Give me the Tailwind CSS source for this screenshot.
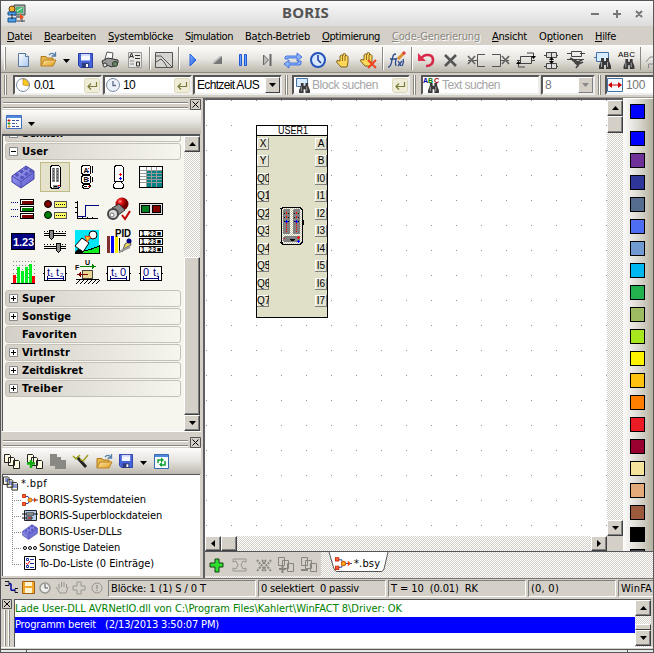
<!DOCTYPE html>
<html lang="de">
<head>
<meta charset="utf-8">
<title>BORIS</title>
<script src="https://cdn.jsdelivr.net/npm/@tailwindcss/browser@4"></script>
</head>
<body class="w-[654px] h-[653px] overflow-hidden bg-[#d4d0c8] text-black font-['DejaVu_Sans_Condensed','DejaVu_Sans',sans-serif] [font-stretch:condensed] text-[11px] leading-4">
<svg width="0" height="0" class="absolute">
  <defs>
    <linearGradient id="blk" x2="1" y2="1"><stop offset="0" stop-color="#a9a9f8"/><stop offset="1" stop-color="#5858c8"/></linearGradient>
    <linearGradient id="gold" x2="1" y2="1"><stop offset="0" stop-color="#ffe9a0"/><stop offset="1" stop-color="#e09a20"/></linearGradient>
    <linearGradient id="blu" x2="1" y2="1"><stop offset="0" stop-color="#8ab8ff"/><stop offset="1" stop-color="#1450d8"/></linearGradient>
    <linearGradient id="page" x2="1" y2="1"><stop offset="0" stop-color="#fff"/><stop offset="1" stop-color="#a8c8f0"/></linearGradient>
    <radialGradient id="ball" cx=".35" cy=".3"><stop offset="0" stop-color="#ff9090"/><stop offset=".4" stop-color="#e01010"/><stop offset="1" stop-color="#700000"/></radialGradient>
    <symbol id="open" viewBox="0 0 17 15"><path d="M1 14V4.500h5l1 1.500h6v3" fill="#e9b84c" stroke="#b07818"/><path d="M1 14 4 8h12l-3 6z" fill="url(#gold)" stroke="#b88020"/><path d="M9 3c2-2.500 4-2 6 0M15.500 0v4h-4" fill="none" stroke="#5580a8" stroke-width="1.300"/></symbol>
    <symbol id="save" viewBox="0 0 15 15"><path d="M.5.5h14v14H2.500l-2-2z" fill="#4464d8" stroke="#2c3ca8"/><path d="M3 1h9v6.500H3z" fill="#f4f6ff"/><path d="M3 2h9" stroke="#b0c0ff"/><path d="M4 10h7v5H4z" fill="#30387c"/><path d="M8 11h2v3H8z" fill="#fff"/></symbol>
    <symbol id="bino" viewBox="0 0 12 11"><path d="M2 0h3v3h2V0h3v3l2 5v3H7V7H5v4H0V8l2-5z" fill="#3a3a3a"/><path d="M2.500 4v5M8.500 4v5" stroke="#aaa"/></symbol>
    <symbol id="sys" viewBox="0 0 16 12"><path d="M3 2.500h3l2 3.500-2 3.500H3M8 6h8" fill="none" stroke="#2c4a98"/><path d="M.5.5h3v3h-3zM.5 8.500h3v3h-3z" fill="#ff6a3a" stroke="#d03010"/><circle cx="8" cy="6" r="2" fill="#ffb020" stroke="#d06010"/><path d="M12 3.500v5l3-2.500z" fill="#e04010"/></symbol>
    <symbol id="brick" viewBox="0 0 24 24"><path d="M1 11 15 1l8 5v8L10 23 1 17z" fill="url(#blk)" stroke="#4040a8"/><path d="m1 11 9 5.500L23 7M10 16.500V23" fill="none" stroke="#4a4ab8"/><g fill="#5454bc"><ellipse cx="6" cy="10" rx="2" ry="1.700"/><ellipse cx="11" cy="12.500" rx="2" ry="1.700"/><ellipse cx="10.500" cy="6.500" rx="2" ry="1.700"/><ellipse cx="15.500" cy="9" rx="2" ry="1.700"/><ellipse cx="15" cy="3.500" rx="2" ry="1.500"/><ellipse cx="20" cy="6" rx="2" ry="1.500"/></g></symbol>
    <symbol id="enter" viewBox="0 0 16 15"><rect x=".5" y=".5" width="15" height="14" rx="2" fill="#efedd8" stroke="#dcd8b8"/><path d="M12.500 4v4.500h-8M7 5.500l-3 3 3 3" fill="none" stroke="#7c7a38" stroke-width="1.200"/></symbol>
    <symbol id="hand" viewBox="0 0 14 15"><path d="M4 8V3l1.500-1L7 3V1l1.500-.5L9.500 1v2l1.500-.5 1 1V9l-1 5H5L.5 9 1 7.500z" fill="#ffd858" stroke="#806020"/><path d="M6.500 3v5M9 3v5" stroke="#906c20"/></symbol>
    <symbol id="docs" viewBox="0 0 16 15"><path d="M.5.5h5l1 1v7h-6zM4.500 3.500h5l1 1v7h-6zM9.500 6.500h5l1 1v7h-6z" fill="#fffbe0" stroke="#222"/></symbol>
    <symbol id="gdocs" viewBox="0 0 16 15"><path d="M.5.500h6v8h-6zM4.500 3.500h6v8h-6zM9.500 6.500h6v8h-6z" fill="#d4d0c8" stroke="#88857e"/></symbol>
  </defs>
</svg>

<main class="w-[654px] h-[653px] border-x border-t border-[#55565a] flex flex-col relative">
  <!-- title bar -->
  <header class="h-[25px] shrink-0 flex items-center bg-linear-to-b from-[#fafafa] to-[#dcdcdc] relative">
    <svg width="20" height="20" viewBox="0 0 20 20" class="ml-[6px]">
      <path d="M7 1h11v10H7z" fill="#a8b0a8" stroke="#3c4c48"/><path d="M9 3h7v6H9z" fill="#48b878"/><path d="M10 7l5-3" stroke="#d8ffd8"/>
      <circle cx="5" cy="5" r="3" fill="#f0b030" stroke="#684010"/><path d="M1 8h8v3H1zM1 14h8v4H1z" fill="#48a0e8" stroke="#205090"/><path d="M5 10v5M9 13h6" stroke="#222"/><path d="M13 10l4 3-4 3z" fill="#ff5010"/><path d="M15 14v4M10 17h8" stroke="#444"/>
    </svg>
    <h1 class="absolute left-[281px] top-[3px] text-[15px] font-bold text-[#555] font-['Noto_Sans',sans-serif]"><span data-w="47">BORIS</span></h1>
    <svg width="62" height="20" viewBox="588 3 62 20" class="ml-auto mr-[3px]"><path d="M591 13h8M613 13h8M617 9v8M636 10l6 6M642 10l-6 6" stroke="#777" stroke-width="2"/></svg>
  </header>

  <!-- menu -->
  <nav class="h-[19px] shrink-0 flex pl-[6px] pt-[3px] whitespace-nowrap">
    <div class="w-[37px]"><span data-w="25"><u>D</u>atei</span></div>
    <div class="w-[64px]"><span data-w="52"><u>B</u>earbeiten</span></div>
    <div class="w-[77px]"><span data-w="65"><u>S</u>ystemblöcke</span></div>
    <div class="w-[60px]"><span data-w="48">S<u>i</u>mulation</span></div>
    <div class="w-[77px]"><span data-w="65">Ba<u>t</u>ch-Betrieb</span></div>
    <div class="w-[70px]"><span data-w="58"><u>O</u>ptimierung</span></div>
    <div class="w-[100px] text-[#8a8780] [text-shadow:1px_1px_0_#fff]"><span data-w="88"><u>C</u>ode-Generierung</span></div>
    <div class="w-[47px]"><span data-w="35"><u>A</u>nsicht</span></div>
    <div class="w-[56px]"><span data-w="44">O<u>p</u>tionen</span></div>
    <div><span data-w="21"><u>H</u>ilfe</span></div>
  </nav>

  <!-- main toolbar -->
  <div class="h-[28px] shrink-0 flex bg-linear-to-b from-[#fcfcfb] via-[#e9e7e2] to-[#bcb8ae] border-b border-[#8c8980]">
    <svg width="10" height="27" viewBox="1 45 10 27"><path d="M4.500 47v23" stroke="#fff"/><path d="M5.500 47v23" stroke="#8c8980"/></svg>
    <svg width="25" height="27" viewBox="11 45 25 27"><path d="M18.500 53.500h7l3 3v10h-10z" fill="url(#page)" stroke="#5878a0"/><path d="M25.500 53.500v3h3" fill="#fff" stroke="#5878a0"/></svg>
    <svg width="24" height="27" viewBox="36 45 24 27"><use href="#open" x="40" y="52" width="17" height="15"/></svg>
    <svg width="13" height="27" viewBox="60 45 13 27"><path d="M63 59h7l-3.500 4z"/></svg>
    <svg width="25" height="27" viewBox="73 45 25 27"><use href="#save" x="78" y="53" width="15" height="15"/></svg>
    <svg width="24" height="27" viewBox="98 45 24 27"><path d="M105 59l2-7 6 1-1 7z" fill="#fff" stroke="#555"/><path d="M102 61l6-3 10 2v3l-6 4-9-3z" fill="#999" stroke="#333"/><circle cx="105" cy="65" r="2" fill="#ddd" stroke="#333"/><circle cx="115" cy="64" r="2.500" fill="#6a8a60" stroke="#333"/></svg>
    <svg width="24" height="27" viewBox="122 45 24 27"><path d="M128.500 52.500h13v15h-13z" fill="#e8e6e2" stroke="#999"/><path d="M129.500 58l2-5 2 5M130 56.500h3M135 55.500h5M135 58.500h5M136.500 62v4h3v-4z" fill="none" stroke="#333"/><path d="M130 61h4M130 64h4" stroke="#888"/></svg>
    <svg width="6" height="27" viewBox="146 45 6 27"><path d="M149.500 47v23" stroke="#8c8980"/><path d="M150.500 47v23" stroke="#fff"/></svg>
    <svg width="25" height="27" viewBox="152 45 25 27"><path d="M155.500 52.500h17v15h-17z" fill="#d6d4d0" stroke="#555"/><path d="M156 56h5l11 11M156 62l5-3 3 3 3 5" fill="none" stroke="#555"/></svg>
    <svg width="4" height="27" viewBox="177 45 4 27"><path d="M178.500 47v23" stroke="#8c8980"/><path d="M179.500 47v23" stroke="#fff"/></svg>
    <svg width="24" height="27" viewBox="181 45 24 27"><path d="M190 54l6 6-6 6z" fill="url(#blu)" stroke="#2060e0"/></svg>
    <svg width="25" height="27" viewBox="205 45 25 27"><path d="M213 64h9v-8z" fill="#777"/><path d="M213 64v-2l7-6h2z" fill="#bbb"/></svg>
    <svg width="25" height="27" viewBox="230 45 25 27"><path d="M239.500 54.500h2v11h-2zM244.500 54.500h2v11h-2z" fill="#6aa0ff" stroke="#1c58d8"/></svg>
    <svg width="25" height="27" viewBox="255 45 25 27"><path d="M263.500 55l5 5-5 5z" fill="#bbb" stroke="#666"/><path d="M270.500 54v12" stroke="#666" stroke-width="2"/></svg>
    <svg width="25" height="27" viewBox="280 45 25 27"><path d="M285 59v-2l1-1h11v-3l5 4-5 4v-3h-9v1zM301 61v3l-1 1h-11v3l-5-4 5-4v3h9v-2z" fill="#8ab4ff" stroke="#2c60d8" stroke-width=".8"/></svg>
    <svg width="26" height="27" viewBox="305 45 26 27"><circle cx="318" cy="60" r="7" fill="#d8e8ff" stroke="#2454b8" stroke-width="2"/><path d="M318 55v5l3 3" fill="none" stroke="#1838a0" stroke-width="1.500"/></svg>
    <svg width="24" height="27" viewBox="331 45 24 27"><use href="#hand" x="336" y="53" width="14" height="15"/></svg>
    <svg width="26" height="27" viewBox="355 45 26 27"><use href="#hand" x="360" y="52" width="14" height="15"/><path d="M368 60l8 8M376 60l-8 8" stroke="#f04020" stroke-width="2"/></svg>
    <svg width="4" height="27" viewBox="381 45 4 27"><path d="M382.500 47v23" stroke="#8c8980"/><path d="M383.500 47v23" stroke="#fff"/></svg>
    <svg width="25" height="27" viewBox="385 45 25 27"><path d="M388 67c3 0 3-3 4-7s1-6 4-6M390 59h6M397 58c-2 3-2 5-1 8M403 59c1 2 0 5-1 7M398 61l3 5M402 61l-4 5" fill="none" stroke="#2c4c90" stroke-width="1.300"/><path d="M398 59l6-6" stroke="#d89030" stroke-width="3"/><path d="M403 54l2-2" stroke="#e04040" stroke-width="3"/></svg>
    <svg width="4" height="27" viewBox="410 45 4 27"><path d="M411.500 47v23" stroke="#8c8980"/><path d="M412.500 47v23" stroke="#fff"/></svg>
    <svg width="24" height="27" viewBox="414 45 24 27"><path d="M421 59c3-6 12-5 12 1 0 4-3 6-7 6" fill="none" stroke="#d82848" stroke-width="2.600"/><path d="M418 53v8h8z" fill="#e03050"/></svg>
    <svg width="25" height="27" viewBox="438 45 25 27"><path d="M445 55l11 11M456 55l-11 11" stroke="#555" stroke-width="2.600"/></svg>
    <svg width="25" height="27" viewBox="463 45 25 27"><path d="M485 54.500h-7.500v12h7.500M468 60.500h9" fill="none" stroke="#555"/><path d="M468 56l7 8M475 56l-7 8" stroke="#666" stroke-width="1.800"/></svg>
    <svg width="25" height="27" viewBox="488 45 25 27"><path d="M492 54.500h8.500v12H492M500 60.500h9" fill="none" stroke="#555"/><path d="M502 56l7 8M509 56l-7 8" stroke="#666" stroke-width="1.800"/></svg>
    <svg width="25" height="27" viewBox="513 45 25 27"><path d="M520.500 56.500h11v7h-11zM517 60.500h3M532 60.500h3M527 53h6.500v4M525 67h-6.500v-4" fill="none" stroke="#444"/><path d="M531 56h5l-2.500 3zM516 64h5l-2.500-3z"/></svg>
    <svg width="25" height="27" viewBox="538 45 25 27"><path d="M546.500 52.500h10v5h-10zM546.500 63.500h10v5h-10zM551.500 53v15M544 55.500h3M556 55.500h2M544 66.500h3M556 66.500h2" fill="#ddd" stroke="#444"/><path d="M549 60h5l-2.500-3zM549 61h5l-2.500 3z"/></svg>
    <svg width="25" height="27" viewBox="563 45 25 27"><path d="M567 53.500h5M571.500 51.500h10v5h-10zM567 59.500h17M580 53.500h5" fill="none" stroke="#444"/><path d="M570 58l8 4 4-2M572 60l7 4 4-2M574 62l5 4M580 62l-4 6" fill="none" stroke="#444" stroke-width="1.500"/></svg>
    <svg width="27" height="27" viewBox="588 45 27 27"><path d="M596.500 52.500h12v9h-12zM594 57.500h3" fill="#d8ecff" stroke="#4470a8"/><use href="#bino" x="599" y="58" width="12" height="11"/></svg>
    <svg width="25" height="27" viewBox="615 45 25 27"><text x="618" y="57" font-size="8" textLength="17" class="font-['Liberation_Sans',sans-serif]">ABC</text><use href="#bino" x="623" y="59" width="12" height="10"/></svg>
    <svg width="13" height="27" viewBox="640 45 13 27"><path d="M640.500 47v23" stroke="#8c8980"/><path d="M646 62l4-5h3M648.500 68v-4h5" fill="none" stroke="#888"/></svg>
  </div>

  <!-- parameter toolbar -->
  <div class="h-[25px] shrink-0 flex items-center bg-[#d4d0c8] border-b border-[#9a978f] font-['Liberation_Sans',sans-serif] text-[12px]">
    <div class="ml-[3px] mr-[6px] w-[3px] h-[20px] border-l border-r border-[#8c8980] bg-white"></div>
    <div class="w-[89px] h-[20px] bg-white border-2 border-t-[#555] border-l-[#555] border-r-[#eee] border-b-[#eee] flex items-center">
      <svg width="16" height="16" viewBox="0 0 16 16"><circle cx="8" cy="8" r="6.500" fill="#fff" stroke="#7888a0"/><path d="M8 8V2a6 6 0 0 1 5.500 7z" fill="#ffc820" stroke="#b08010" stroke-width=".6"/></svg>
      <span class="ml-[3px]" data-w="20">0.01</span><svg width="16" height="15" class="ml-auto"><use href="#enter"/></svg>
    </div>
    <div class="w-[89px] h-[20px] bg-white border-2 border-t-[#555] border-l-[#555] border-r-[#eee] border-b-[#eee] flex items-center ml-px">
      <svg width="16" height="16" viewBox="0 0 16 16"><circle cx="8" cy="8" r="6.500" fill="#eef2fa" stroke="#7888a0"/><path d="M8 4v4.500h3" fill="none" stroke="#5a6a88" stroke-width="1.300"/></svg>
      <span class="ml-[2px]" data-w="12">10</span><svg width="16" height="15" class="ml-auto"><use href="#enter"/></svg>
    </div>
    <div class="w-[89px] h-[20px] bg-white border-2 border-t-[#555] border-l-[#555] border-r-[#eee] border-b-[#eee] flex items-center ml-px pl-[2px]">
      <span data-w="62">Echtzeit AUS</span>
      <div class="ml-auto w-[15px] h-4 bg-[#d4d0c8] border border-t-white border-l-white border-r-[#404040] border-b-[#404040] flex items-center justify-center"><svg width="7" height="4"><path d="M0 0h7L3.500 4z"/></svg></div>
    </div>
    <div class="ml-[3px] mr-[4px] w-[3px] h-[20px] border-l border-r border-[#8c8980] bg-white"></div>
    <div class="w-[118px] h-[20px] bg-white border-2 border-t-[#555] border-l-[#555] border-r-[#eee] border-b-[#eee] flex items-center text-[#a5a5a5]">
      <svg width="16" height="16" viewBox="0 0 16 16" class="ml-px"><path d="M1.500 1.500h11v8h-11z" fill="#d8ecff" stroke="#4470a8"/><use href="#bino" x="4" y="6" width="11" height="10"/></svg>
      <span class="ml-px" data-w="66">Block suchen</span><svg width="16" height="15" class="ml-auto"><use href="#enter"/></svg>
    </div>
    <div class="ml-[3px] mr-[5px] w-[3px] h-[20px] border-l border-r border-[#8c8980] bg-white"></div>
    <div class="w-[119px] h-[20px] bg-white border-2 border-t-[#555] border-l-[#555] border-r-[#eee] border-b-[#eee] flex items-center text-[#a5a5a5]">
      <svg width="17" height="16" viewBox="0 0 17 16"><g font-size="7" font-weight="bold"><text x="0" y="6" fill="#0000a0">A</text><text x="5" y="6" fill="#008000">B</text><text x="11" y="6" fill="#b00000">C</text></g><use href="#bino" x="5" y="6" width="11" height="10"/></svg>
      <span class="ml-[2px]" data-w="58">Text suchen</span>
    </div>
    <div class="w-[54px] h-[20px] bg-white border-2 border-t-[#555] border-l-[#555] border-r-[#eee] border-b-[#eee] flex items-center ml-px pl-[2px] text-[#777]">
      8<div class="ml-auto w-[15px] h-4 bg-[#d4d0c8] border border-t-white border-l-white border-r-[#808080] border-b-[#808080] flex items-center justify-center"><svg width="7" height="4"><path fill="#888" d="M0 0h7L3.500 4z"/></svg></div>
    </div>
    <div class="ml-[3px] mr-[4px] w-[3px] h-[20px] border-l border-r border-[#8c8980] bg-white"></div>
    <div class="flex-1 h-[20px] bg-white border-2 border-r-0 border-t-[#555] border-l-[#555] border-b-[#eee] flex items-center text-[#777] overflow-hidden">
      <svg width="16" height="14" viewBox="0 0 16 14" class="shrink-0"><path d="M.5.500h15v13H.5z" fill="#f4f8ff" stroke="#4470a8"/><path d="M2 7h12" stroke="#d00000"/><path d="M5 4v6L1 7zM11 4v6l4-3z" fill="#d00000"/></svg>
      <span class="ml-[3px]" data-w="19">100</span>
    </div>
  </div>

  <!-- workspace -->
  <div class="h-[480px] shrink-0 flex">
    <aside class="w-[202px] shrink-0 flex flex-col pl-px pt-px">
      <div class="h-[11px] flex items-center"><div class="ml-px w-[185px] h-[6px] border-y border-[#88857e] bg-[#d4d0c8] shadow-[inset_0_1px_0_#fff,0_1px_0_#fff]"></div><svg width="11" height="11" class="ml-[2px]"><path d="M.5.500h10v10H.5z" fill="#d4d0c8" stroke="#555"/><path d="M2.500 2.500l6 6M8.500 2.500l-6 6" stroke="#000"/></svg></div>
      <div class="h-[24px] w-[199px] shrink-0 flex items-center bg-linear-to-b from-[#fcfcfb] via-[#e6e4df] to-[#bcb8ae]">
        <svg width="34" height="24" viewBox="2 110 34 24"><path d="M6.500 115.500h15v13h-15z" fill="#fff" stroke="#4470c0"/><path d="M7 116h14v2H7z" fill="#5088e0"/><path d="M8 120h2v1H8z" stroke="#d02020"/><path d="M8 123h2v1H8z" stroke="#20a020"/><path d="M8 126h2v1H8z" stroke="#e0a020"/><path d="M12 120.500h7M12 123.500h5M12 126.500h7" stroke="#3858a0" stroke-dasharray="3 1"/><path d="M28 122h7l-3.500 4z"/></svg>
      </div>
      <div class="h-[297px] w-[198px] shrink-0 flex bg-[#f6f5ee] border-t-2 border-l border-[#55565a]">
        <div class="flex-1 overflow-hidden pl-[2px] font-bold">
          <div class="h-[6px] w-[176px] border border-t-0 border-[#c4c2b8] rounded-b-[3px] bg-linear-to-r from-[#d4d0c8] to-[#f6f5ee] relative overflow-hidden"><svg width="9" height="4" class="ml-[3px] absolute bottom-[3px]"><path d="M.5 0v3.500h8V0" fill="#fff" stroke="#888"/></svg><span class="absolute left-4 bottom-[-1px]" data-w="41">Senken</span></div>
          <div class="mt-px h-[17px] w-[176px] border border-[#c4c2b8] rounded-[3px] bg-linear-to-r from-[#d4d0c8] to-[#f6f5ee] flex items-center"><svg width="9" height="9" class="ml-[3px] mr-[4px]"><path d="M.5.500h8v8h-8z" fill="#fff" stroke="#888"/><path d="M2 4.500h5" stroke="#000"/></svg><span data-w="26">User</span></div>
          <!-- block palette -->
          <svg width="178" height="130" viewBox="5 160 178 130" shape-rendering="crispEdges">
            <use href="#brick" x="11" y="165" width="24" height="24" shape-rendering="auto"/>
            <path d="M40.500 162.500h29v29h-29z" fill="#e5e2cc" stroke="#c0ba84"/>
            <g stroke="#000"><path d="M51.500 165.500h7l2 2v19l-2 2h-7l-1-2v-19z" fill="#fff"/><path d="M52 168h3v14h-3zM56 168h3v14h-3z" fill="#888" stroke="none"/><path d="M53.500 168v14M57.500 168v14" stroke="#444" stroke-dasharray="1 2"/><path d="M53 185h6v3h-6z" fill="#888" stroke="none"/><path d="M54 186.500h3"/><path d="M58 185.500h2" stroke="red"/><path d="M58 187.500h1" stroke="#00f"/></g>
            <g fill="#fff" stroke="#000"><path d="M83.500 165.500h6l1 1v7l-1 1h-6l-2-1v-7zM83.500 175.500h6l1 1v6l-1 1h-6l-2-1v-6zM83.500 184.500h6l1 2-2 2h-5l-1-2z"/><path d="M92.500 166v7M92.500 177v5" fill="none"/><path d="M88 168.500h1M88 178.500h1M88 186.500h2" stroke="red"/><path d="M88 171.500h1M88 180.500h1" stroke="#00f"/><path d="M84 186.500h3"/></g>
            <g fill="#fff" stroke="#000"><path d="M115.500 165.500h6l2 2v13l-2 2 2 2v3l-2 1h-6l-2-1v-3l2-2-1-2v-13z"/><path d="M115 181.500h8"/><path d="M120.500 173v3M119 174.500h3" stroke="red"/><path d="M120.500 177v3M119 178.500h3" stroke="#00f"/></g>
            <path d="M139.500 166.500h23v21h-23z" fill="#fff" stroke="#000"/><path d="M146 170h16v17h-16z" fill="#008080"/><path d="M146.500 167v20M151.500 167v20M156.500 167v20M140 170.500h22M140 173.500h22M140 176.500h22M140 179.500h22M140 182.500h22" stroke="#999"/><path d="M139.500 166.500h23v21h-23z" fill="none" stroke="#000"/>
            <g stroke="#000"><path d="M20.500 199.500h13v5h-13zM20.500 206.500h13v5h-13zM20.500 213.500h13v5h-13z" fill="#fff"/><path d="M22 201h10v2H22zM22 215h10v2H22z" fill="#800000" stroke="#800000"/><path d="M22 208h10v2H22z" fill="#008000" stroke="#008000"/><path d="M11 202.500h8M11 209.500h8M11 216.500h8" stroke="#000080" stroke-dasharray="1 1"/></g>
            <g shape-rendering="auto"><circle cx="48" cy="204" r="3.500" fill="#800000" stroke="#000"/><circle cx="48" cy="215" r="3.500" fill="#008000" stroke="#000"/></g><path d="M54.500 201.500h12v6h-12zM54.500 212.500h12v6h-12z" fill="#ff6" stroke="#555"/><path d="M56 204.500h9M56 215.500h9" stroke="#000" stroke-dasharray="1 1"/>
            <path d="M77.500 201v17.500H98M75 202.500h3M75 207.500h3M75 212.500h3M82.500 219v-2M87.500 219v-2M92.500 219v-2" fill="none" stroke="#000"/><path d="M78 216.500h7v-11h14" fill="none" stroke="#000080"/>
            <g shape-rendering="auto"><circle cx="122" cy="204" r="6.500" fill="url(#ball)"/><path d="M112 208l7-4 6 6-8 6z" fill="#888" stroke="#333"/><circle cx="113" cy="214" r="5" fill="#ddd" stroke="#444" stroke-width="2"/><circle cx="112" cy="215" r="2" fill="#fff" stroke="#777"/><path d="M122 215l3 4 5-8" fill="none" stroke="#c00000" stroke-width="2"/></g>
            <path d="M139.500 203.500h23v11h-23z" fill="#ddd" stroke="#000"/><path d="M141.500 205.500h8v7h-8z" fill="#008020" stroke="#000"/><path d="M152.500 205.500h8v7h-8z" fill="#800000" stroke="#000"/>
            <path d="M11.500 233.500h23v16h-23z" fill="#000080" stroke="#000"/>
            <g stroke="#000" fill="none"><path d="M44 233.500h22M44 235.500h22M44 246.500h22M44 248.500h22"/><path d="M44 231.500h22M44 244.500h22" stroke-dasharray="1 2"/><path d="M49.500 230.500h4v7l-2 2-2-2zM56.500 243.500h4v7l-2 2-2-2z" fill="#888"/></g>
            <path d="M75 230h24v23H75z" fill="#00e8f8"/><path d="M75 253c8-2 17-3 24-7v7z" fill="#10f020" stroke="#000"/><g shape-rendering="auto"><circle cx="93" cy="235" r="4" fill="#fff" stroke="#000"/><path d="M75 246l7-8 7 5-6 9z" fill="#fff" stroke="#000"/><path d="M75 253c1-5 7-5 8 0z"/><path d="M85 236l6 1-4 5z" fill="#ffd020" stroke="#f03010"/></g>
            <path d="M107 236h3v17h-3z" fill="#803030"/><path d="M111 236h3v17h-3z" fill="#00f"/><path d="M115 236h3v17h-3z" fill="#fe0"/><path d="M119 238h1v15h-1z"/><g shape-rendering="auto"><path d="M122 252l3-8 5-3 1 4-6 3z" fill="#f0d860" stroke="#555"/><circle cx="129" cy="241" r="2.500" fill="#000080"/><path d="M119 252l11-5" stroke="#999" stroke-width="2"/></g>
            <g fill="#fff" stroke="#000"><path d="M139.500 230.500h23v6h-23zM139.500 238.500h23v6h-23zM139.500 246.500h23v6h-23z"/></g>
            <g font-family="Liberation Sans" font-weight="bold"><text x="13" y="246" font-size="11" fill="#fff" textLength="21">1.23</text><text x="115" y="237" font-size="10" textLength="16" lengthAdjust="spacingAndGlyphs">PID</text><g font-size="7"><text x="141" y="236" textLength="20">1.23■</text><text x="141" y="244" textLength="20">1.23■</text><text x="141" y="252" textLength="20">1.23■</text></g></g>
            <path d="M13 261.500h22M13 265.500h22M13 269.500h22M13 273.500h22M13 277.500h22" stroke="#888" stroke-dasharray="1 2"/><path d="M13 275h3v8h-3zM32 276h3v7h-3z" fill="#f00"/><path d="M17 267h3v16h-3zM21 271h3v12h-3zM25 267h3v16h-3zM29 264h3v19h-3z" fill="#00f020"/><path d="M11 283.500h24" stroke="#000"/>
            <g fill="#fff" stroke="#000"><path d="M44.500 266.500h21v14h-21zM107.500 266.500h22v14h-22zM140.500 266.500h21v14h-21z"/><path d="M43 273h1M66 273h1M106 273h1M130 273h1M139 273h1M162 273h1"/></g><path d="M47 278.500h17M47.500 276v4M63.500 276v4M110 278.500h17M110.500 276v4M126.500 276v4M143 278.500h16M143.500 276v4M158.500 276v4" stroke="#000080"/>
            <g font-family="Liberation Sans" font-size="11" fill="#000080" font-weight="normal"><text x="47" y="276">t</text><text x="56" y="276">t</text><text x="111" y="276">t</text><text x="120" y="276">0</text><text x="143" y="276">0</text><text x="153" y="276">t</text><g font-size="6"><text x="50" y="277">1</text><text x="60" y="277">2</text><text x="114" y="277">1</text><text x="156" y="277">1</text></g></g>
            <path d="M82.500 270.500h10v8h-10z" fill="#e8d890" stroke="#444"/><path d="M80 266.500h13" stroke="#008000"/><path d="M92 264l4 2.500-4 2.500z" fill="#008000"/><path d="M79 274.500h9" stroke="#800000"/><path d="M81 272v5l-4-2.500z" fill="#800000"/><path d="M76 279.500h23" stroke="#000"/><path d="M76 284l4-4M80 284l4-4M84 284l4-4M88 284l4-4M92 284l4-4M96 284l4-4" stroke="#000" shape-rendering="auto"/>
            <g font-family="Liberation Sans" font-size="7"><text x="85" y="265">U</text><text x="75" y="270">F</text><text x="83.500" y="172.500">A</text><text x="83.500" y="182">B</text></g>
          </svg>
          <div class="flex flex-col gap-px">
            <div class="h-[17px] w-[176px] border border-[#c4c2b8] rounded-[3px] bg-linear-to-r from-[#d4d0c8] to-[#f6f5ee] flex items-center"><svg width="9" height="9" class="ml-[3px] mr-[4px]"><path d="M.5.500h8v8h-8z" fill="#fff" stroke="#888"/><path d="M2 4.500h5M4.500 2v5" stroke="#000"/></svg><span data-w="33">Super</span></div>
            <div class="h-[17px] w-[176px] border border-[#c4c2b8] rounded-[3px] bg-linear-to-r from-[#d4d0c8] to-[#f6f5ee] flex items-center"><svg width="9" height="9" class="ml-[3px] mr-[4px]"><path d="M.5.500h8v8h-8z" fill="#fff" stroke="#888"/><path d="M2 4.500h5M4.500 2v5" stroke="#000"/></svg><span data-w="49">Sonstige</span></div>
            <div class="h-[17px] w-[176px] border border-[#c4c2b8] rounded-[3px] bg-linear-to-r from-[#d4d0c8] to-[#f6f5ee] flex items-center pl-4"><span data-w="55">Favoriten</span></div>
            <div class="h-[17px] w-[176px] border border-[#c4c2b8] rounded-[3px] bg-linear-to-r from-[#d4d0c8] to-[#f6f5ee] flex items-center"><svg width="9" height="9" class="ml-[3px] mr-[4px]"><path d="M.5.500h8v8h-8z" fill="#fff" stroke="#888"/><path d="M2 4.500h5M4.500 2v5" stroke="#000"/></svg><span data-w="48">VirtInstr</span></div>
            <div class="h-[17px] w-[176px] border border-[#c4c2b8] rounded-[3px] bg-linear-to-r from-[#d4d0c8] to-[#f6f5ee] flex items-center"><svg width="9" height="9" class="ml-[3px] mr-[4px]"><path d="M.5.500h8v8h-8z" fill="#fff" stroke="#888"/><path d="M2 4.500h5M4.500 2v5" stroke="#000"/></svg><span data-w="61">Zeitdiskret</span></div>
            <div class="h-[17px] w-[176px] border border-[#c4c2b8] rounded-[3px] bg-linear-to-r from-[#d4d0c8] to-[#f6f5ee] flex items-center"><svg width="9" height="9" class="ml-[3px] mr-[4px]"><path d="M.5.500h8v8h-8z" fill="#fff" stroke="#888"/><path d="M2 4.500h5M4.500 2v5" stroke="#000"/></svg><span data-w="41">Treiber</span></div>
          </div>
        </div>
        <div class="w-4 shrink-0 flex flex-col bg-[repeating-conic-gradient(#fff_0_25%,#d4d0c8_0_50%)] bg-[length:2px_2px]">
          <div class="h-4 shrink-0 bg-[#d4d0c8] border border-t-white border-l-white border-r-[#404040] border-b-[#404040] shadow-[inset_-1px_-1px_0_#808080] flex items-center justify-center"><svg width="7" height="4"><path d="M0 4h7L3.500 0z"/></svg></div>
          <div class="h-[105px] shrink-0"></div>
          <div class="flex-1 bg-[#d4d0c8] border border-t-white border-l-white border-r-[#404040] border-b-[#404040] shadow-[inset_-1px_-1px_0_#808080]"></div>
          <div class="h-4 shrink-0 bg-[#d4d0c8] border border-t-white border-l-white border-r-[#404040] border-b-[#404040] shadow-[inset_-1px_-1px_0_#808080] flex items-center justify-center"><svg width="7" height="4"><path d="M0 0h7L3.500 4z"/></svg></div>
        </div>
      </div>
      <div class="h-[6px] shrink-0 border-t border-white w-[199px]"></div>
      <div class="h-[11px] shrink-0 flex items-center"><div class="ml-px w-[185px] h-[6px] border-y border-[#88857e] shadow-[inset_0_1px_0_#fff,0_1px_0_#fff]"></div><svg width="11" height="11" class="ml-[2px]"><path d="M.5.500h10v10H.5z" fill="#d4d0c8" stroke="#555"/><path d="M2.500 2.500l6 6M8.500 2.500l-6 6" stroke="#000"/></svg></div>
      <svg width="199" height="26" viewBox="2 448 199 26" class="shrink-0 bg-linear-to-b from-[#fcfcfb] via-[#e6e4df] to-[#bcb8ae]">
        <use href="#docs" x="4" y="454" width="16" height="15"/><use href="#docs" x="27" y="454" width="16" height="15"/><path d="M27 463.500h8M31 460v8" stroke="#10b010" stroke-width="2.500"/>
        <path d="M50 454h7v3h4v3h5v9h-11v-3h-5z" fill="#8a8882"/>
        <path d="M77 457l9 10" stroke="#222" stroke-width="3"/><path d="M73 456l3 3 4-4M80 459l3 2 5-6" fill="none" stroke="#a0a020" stroke-width="1.500"/>
        <use href="#open" x="96" y="454" width="17" height="15"/><use href="#save" x="119" y="454" width="14" height="14"/><path d="M140 461h7l-3.500 4z"/>
        <path d="M154.500 454.500h14v14h-14z" fill="#f8fcff" stroke="#3868b0"/><path d="M155 455h13v2h-13z" fill="#5088e0"/><path d="M158 463v-3h5M165 461v4h-5" fill="none" stroke="#10a030" stroke-width="1.500"/><path d="M161 457.500v5l3-2.500zM162 462v5l-3-2.500z" fill="#10a030"/>
      </svg>
      <div class="w-[198px] flex-1 bg-white border-t border-l border-[#55565a] flex relative whitespace-nowrap">
        <svg width="36" height="100" viewBox="3 474 36 100"><path d="M12.500 491v73M12 499.500h9M12 515.500h9M12 531.500h9M12 547.500h9M12 563.500h9" fill="none" stroke="#888" stroke-dasharray="1 1"/>
          <use href="#docs" x="3" y="475" width="15" height="15"/><path d="M5 478h3M5 480h3M9 481h3M9 483h3M13 484h4M13 486h4" stroke="#2040c0"/>
          <use href="#sys" x="22" y="493" width="16" height="12"/>
          <path d="M24.500 509.500h12v10h-12z" fill="#b8d0f0" stroke="#222"/><path d="M26 512h8v2h-8zM26 516h6v2h-6z" fill="#fff" stroke="#111"/><path d="M22 513h3M22 517h3M35 513h3" stroke="#111"/><path d="M28 517h3" stroke="#d00"/>
          <use href="#brick" x="22" y="523" width="16" height="16"/>
          <g fill="#fff" stroke="#000"><circle cx="25" cy="547" r="1.500"/><circle cx="30" cy="547" r="1.500"/><circle cx="35" cy="547" r="1.500"/></g>
          <path d="M24.500 555.500h11v13h-11z" fill="#fff" stroke="#000"/><path d="M26.500 557.500h2v2h-2zM26.500 564.500h2v2h-2zM30 558.500h4M30 562.500h4M30 566.500h4" fill="none" stroke="#1830a0"/><path d="M26 562l1.500 1.500L30 560" fill="none" stroke="red"/></svg>
        <div class="flex flex-col pt-px">
          <span class="ml-[-18px]"><span data-w="26">*.bpf</span></span>
          <span><span data-w="107">BORIS-Systemdateien</span></span>
          <span><span data-w="123">BORIS-Superblockdateien</span></span>
          <span><span data-w="83">BORIS-User-DLLs</span></span>
          <span><span data-w="81">Sonstige Dateien</span></span>
          <span><span data-w="115">To-Do-Liste (0 Einträge)</span></span>
        </div>
      </div>
      <div class="h-[2px] shrink-0"></div>
    </aside>

    <!-- sheet -->
    <section class="w-[420px] shrink-0 flex flex-col border-l-2 border-t-2 border-[#606064]">
      <div class="h-[436px] flex shrink-0">
        <div class="w-[402px] bg-white">
          <svg width="402" height="436" viewBox="205 100 402 436">
            <defs><pattern id="grid" x="206" y="100" width="25" height="25" patternUnits="userSpaceOnUse"><path d="M0 0h1v1H0z" fill="#909090"/></pattern><pattern id="chk" width="2" height="2" patternUnits="userSpaceOnUse"><path d="M0 0h2v2H0z" fill="#fff"/><path d="M0 0h1v1H0zM1 1h1v1H1z" fill="#c8c8a8"/></pattern></defs>
            <rect x="205" y="100" width="402" height="436" fill="url(#grid)"/>
            <g shape-rendering="crispEdges">
              <path d="M256.500 125.500h71v192h-71z" fill="#e0dfc8" stroke="#000"/><path d="M257 126h70v9h-70z" fill="#fff"/><path d="M257 135.500h70" stroke="#000"/>
              <g id="ports"></g>
              <path d="M281.500 207.500h20v36h-20z" fill="url(#chk)"/><path d="M283 207.500h17l2 2v33l-2 2h-17l-2-2v-33zM303 220v5M280 208h3M280 242h3" fill="none" stroke="#000"/>
              <path d="M284 209h5l1 1v24h-7v-24zM294 209h5l1 1v24h-7v-24zM284 236h15l1 1v4l-1 1h-15l-1-1v-4z" fill="#808080"/><path d="M286.500 223v10M296.500 223v10" stroke="#f00" stroke-dasharray="1 1"/><path d="M286.500 212v7M296.500 212v7" stroke="#f00" stroke-dasharray="2 2"/><path d="M284 213.500h1M288 213.500h1M284 217.500h1M288 217.500h1M284 221.500h1M288 221.500h1M294 213.500h1M298 213.500h1M294 217.500h1M298 217.500h1M294 221.500h1M298 221.500h1" stroke="#000"/><path d="M285 221.500h3M286.500 220v3M295 221.500h3M296.500 220v3M297 241.500h3M298.500 240v3" stroke="#00f"/><path d="M297 237.500h3M298.500 236v3M284 238.500h1" stroke="#f00"/><path d="M290 239h5v1h-1v1h-3v-1h-1z"/>
            </g>
            <text x="278" y="134" font-size="10" textLength="30" lengthAdjust="spacingAndGlyphs" font-family="Liberation Sans">USER1</text>
          </svg>
        </div>
        <div class="w-4 flex flex-col bg-[repeating-conic-gradient(#fff_0_25%,#d4d0c8_0_50%)] bg-[length:2px_2px]">
          <div class="h-4 bg-[#d4d0c8] border border-t-white border-l-white border-r-[#404040] border-b-[#404040] shadow-[inset_-1px_-1px_0_#808080] flex items-center justify-center"><svg width="7" height="4"><path d="M0 4h7L3.500 0z"/></svg></div>
          <div class="h-[17px] bg-[#d4d0c8] border border-t-white border-l-white border-r-[#404040] border-b-[#404040] shadow-[inset_-1px_-1px_0_#808080]"></div>
          <div class="mt-auto h-4 bg-[#d4d0c8] border border-t-white border-l-white border-r-[#404040] border-b-[#404040] shadow-[inset_-1px_-1px_0_#808080] flex items-center justify-center"><svg width="7" height="4"><path d="M0 0h7L3.500 4z"/></svg></div>
        </div>
      </div>
      <div class="h-[15px] w-[402px] shrink-0 flex bg-[repeating-conic-gradient(#fff_0_25%,#d4d0c8_0_50%)] bg-[length:2px_2px]">
        <div class="w-4 bg-[#d4d0c8] border border-t-white border-l-white border-r-[#404040] border-b-[#404040] shadow-[inset_-1px_-1px_0_#808080] flex items-center justify-center"><svg width="4" height="7"><path d="M4 0v7L0 3.500z"/></svg></div>
        <div class="w-4 bg-[#d4d0c8] border border-t-white border-l-white border-r-[#404040] border-b-[#404040] shadow-[inset_-1px_-1px_0_#808080]"></div>
        <div class="ml-auto w-4 bg-[#d4d0c8] border border-t-white border-l-white border-r-[#404040] border-b-[#404040] shadow-[inset_-1px_-1px_0_#808080] flex items-center justify-center"><svg width="4" height="7"><path d="M0 0v7l4-3.500z"/></svg></div>
      </div>
      <div class="w-[448px] flex-1 border-t border-[#55565a] flex bg-[repeating-conic-gradient(#fff_0_25%,#d4d0c8_0_50%)] bg-[length:2px_2px] relative">
        <svg width="116" height="24" viewBox="204 552 116 24" class="bg-[#d4d0c8]"><path d="M214 559h4v4h4v4h-4v5h-4v-5h-5v-4h5z" fill="#30e030" stroke="#104010"/><path d="M232 559h13v3l-3-1-2 4 2 4 3-1v3h-13v-3l3 1 2-4-2-4-3 1z" fill="none" stroke="#99968f"/><path d="M256 560l9 11M265 560l-9 11M261 560l9 11M270 560l-9 11" stroke="#8c8982" stroke-width="2" stroke-dasharray="2 1"/><use href="#gdocs" x="277" y="557" width="16" height="15"/><path d="M278 569h7M281.500 566v7" stroke="#88857e" stroke-width="2"/><use href="#gdocs" x="300" y="557" width="16" height="15"/><path d="M300 570h7" stroke="#88857e" stroke-width="2"/></svg>
        <svg width="75" height="24" viewBox="321 552 75 24"><path d="M329 552l5 17 2 2.500h46l2-2.500 4-17" fill="#fff" stroke="#555"/><use href="#sys" x="335" y="557" width="17" height="13"/><text x="354" y="567" textLength="26">*.bsy</text></svg>
      </div>
    </section>

    <!-- colour palette -->
    <div class="w-[30px] shrink-0 h-[453px] pt-[5px] flex flex-col items-start gap-[7px] pl-[7px] overflow-hidden border-t border-white bg-linear-to-r from-[#fbfbfa] via-[#dedbd4] to-[#b5b09f]">
      <i class="size-[15px] shrink-0 border border-black bg-[#0000ff] mb-[5px]"></i>
      <i class="size-[15px] shrink-0 border border-black bg-[#0000ff]"></i>
      <i class="size-[15px] shrink-0 border border-black bg-[#6f3198]"></i>
      <i class="size-[15px] shrink-0 border border-black bg-[#2f3699]"></i>
      <i class="size-[15px] shrink-0 border border-black bg-[#546d8e]"></i>
      <i class="size-[15px] shrink-0 border border-black bg-[#4d6df3]"></i>
      <i class="size-[15px] shrink-0 border border-black bg-[#709ad1]"></i>
      <i class="size-[15px] shrink-0 border border-black bg-[#00b7ef]"></i>
      <i class="size-[15px] shrink-0 border border-black bg-[#22b14c]"></i>
      <i class="size-[15px] shrink-0 border border-black bg-[#9dbb61]"></i>
      <i class="size-[15px] shrink-0 border border-black bg-[#a8e61d]"></i>
      <i class="size-[15px] shrink-0 border border-black bg-[#fff200]"></i>
      <i class="size-[15px] shrink-0 border border-black bg-[#ffc20e]"></i>
      <i class="size-[15px] shrink-0 border border-black bg-[#ff7e00]"></i>
      <i class="size-[15px] shrink-0 border border-black bg-[#ed1c24]"></i>
      <i class="size-[15px] shrink-0 border border-black bg-[#990030]"></i>
      <i class="size-[15px] shrink-0 border border-black bg-[#f5e49c]"></i>
      <i class="size-[15px] shrink-0 border border-black bg-[#e5aa7a]"></i>
      <i class="size-[15px] shrink-0 border border-black bg-[#9c5a3c]"></i>
      <i class="size-[15px] shrink-0 border border-black bg-black"></i>
      <i class="size-[15px] shrink-0 border border-black bg-[#464646]"></i>
    </div>
  </div>

  <!-- status bar -->
  <div class="h-[21px] shrink-0 flex pt-px pb-[3px] whitespace-nowrap border-t border-[#77746d]">
    <svg width="105" height="17" viewBox="1 580 105 17" class="mr-[2px]"><path d="M5 581.500h4v4H5M9 583.500h2v7h4M18 588.500h-3v4h3" fill="none" stroke="#112"/><path d="M9 584h2v6h4" fill="none" stroke="#0000e0"/><path d="M22.500 581.500h12v12h-12z" fill="#f0a830" stroke="#a06010"/><path d="M25 582h7v4h-7zM25 588h7v5h-7z" fill="#fff4d0"/><circle cx="45" cy="588" r="5" fill="#eee" stroke="#99968f" stroke-width="1.500"/><path d="M45 584v4h3" fill="none" stroke="#555"/><g fill="none" stroke="#99968f"><path d="M59 589v-5M61.500 587v-5M64 587v-5M66.500 588v-4M56 587l4 6h6l2-6"/><path d="M77 582h4v4h4v4h-4v4h-4v-4h-4v-4h4z"/><circle cx="97" cy="588" r="5"/><path d="M97 585v4M97 590v1" stroke-width="1.500"/></g></svg>
    <div class="w-[148px] h-[17px] border border-t-[#808080] border-l-[#808080] border-white pl-[2px]"><span data-w="95">Blöcke: 1 (1) S / 0 T</span></div>
    <div class="ml-[2px] w-[128px] h-[17px] border border-t-[#808080] border-l-[#808080] border-white pl-[2px]"><span data-w="98">0 selektiert&nbsp; 0 passiv</span></div>
    <div class="ml-[2px] w-[138px] h-[17px] border border-t-[#808080] border-l-[#808080] border-white pl-[2px]"><span data-w="87">T = 10&nbsp; (0.01)&nbsp; RK</span></div>
    <div class="ml-[2px] w-[88px] h-[17px] border border-t-[#808080] border-l-[#808080] border-white pl-[2px]"><span data-w="28">(0, 0)</span></div>
    <div class="ml-[2px] flex-1 h-[17px] border border-r-0 border-t-[#808080] border-l-[#808080] border-white pl-[2px] overflow-hidden"><span data-w="31">WinFA</span></div>
  </div>

  <!-- message log -->
  <div class="h-[48px] shrink-0 flex pl-px whitespace-nowrap">
    <svg width="12" height="48" viewBox="2 600 12 48"><path d="M2.500 600.500h9v9h-9z" fill="#d4d0c8" stroke="#555"/><path d="M4 602l6 6M10 602l-6 6" stroke="#000"/><path d="M4.500 611v36M8.500 611v36" stroke="#fff"/><path d="M5.500 611v36M9.500 611v36" stroke="#88857e"/></svg>
    <div class="w-[637px] flex bg-white border-t border-l border-[#55565a]">
      <div class="flex-1 pt-px">
        <div class="h-4 text-[#008000] leading-[15px]"><span data-w="387">Lade User-DLL AVRNetIO.dll von C:\Program Files\Kahlert\WinFACT 8\Driver: OK</span></div>
        <div class="h-4 bg-[#0000ff] text-white leading-[15px]"><span data-w="204">Programm bereit&nbsp;&nbsp; (2/13/2013 3:50:07 PM)</span></div>
      </div>
      <div class="w-4 flex flex-col bg-[repeating-conic-gradient(#fff_0_25%,#d4d0c8_0_50%)] bg-[length:2px_2px]">
        <div class="h-4 bg-[#d4d0c8] border border-t-white border-l-white border-r-[#404040] border-b-[#404040] shadow-[inset_-1px_-1px_0_#808080] flex items-center justify-center"><svg width="7" height="4"><path d="M0 4h7L3.500 0z"/></svg></div>
        <div class="mt-[8px] h-[6px] bg-[#d4d0c8] border border-t-white border-l-white border-r-[#404040] border-b-[#404040]"></div>
        <div class="h-4 bg-[#d4d0c8] border border-t-white border-l-white border-r-[#404040] border-b-[#404040] shadow-[inset_-1px_-1px_0_#808080] flex items-center justify-center"><svg width="7" height="4"><path d="M0 0h7L3.500 4z"/></svg></div>
      </div>
    </div>
  </div>
  <div class="flex-1 flex flex-col"><div class="h-[2px] border-t border-white"></div><div class="h-px bg-[#55565a]"></div><div class="flex-1 border-b border-[#55565a] bg-[#e8e8e8] flex"><i class="ml-[25px] w-px bg-[#55565a]"></i><i class="ml-[600px] w-px bg-[#55565a]"></i></div></div>
</main>
<script>
  // Block ports: inputs on the left edge, outputs on the right
  const tops = [138, 155, 173, 190, 208, 225, 243, 260, 278, 295];
  const left = ['X','Y','Q0','Q1','Q2','Q3','Q4','Q5','Q6','Q7'];
  const right = ['A','B','I0','I1','I2','I3','I4','I5','I6','I7'];
  const port = (x, y, s, start) => `<svg x="${x}" y="${y}" width="12" height="12"><rect width="12" height="11" fill="#e4e3d0"/><path d="M.5 11V.5h12" stroke="#fff" fill="none"/><path d="M0 11.500h11.500V0" stroke="#808080" fill="none"/><text x="${start ? 0 : 6}" y="9" font-size="10" text-anchor="${start ? 'start' : 'middle'}" font-family="Liberation Sans">${s}</text></svg>`;
  document.getElementById('ports').innerHTML = tops.map((y, i) =>
    port(257, y, left[i], i > 1) + port(315, y, right[i], false)).join('');

  const fit = e => {
    e.style.display = 'inline-block'; e.style.whiteSpace = 'nowrap'; e.style.flexShrink = 0;
    e.style.letterSpacing = '0px';
    e.style.letterSpacing = ((+e.dataset.w - e.getBoundingClientRect().width) / e.textContent.length) + 'px';
  };
  const labels = [...document.querySelectorAll('[data-w]')];
  const fitAll = () => labels.forEach(fit);
  const watch = new ResizeObserver(list => list.forEach(r => fit(r.target)));
  labels.forEach(e => watch.observe(e));
  addEventListener('load', fitAll);
  document.fonts.ready.then(fitAll);
</script>
</body>
</html>
